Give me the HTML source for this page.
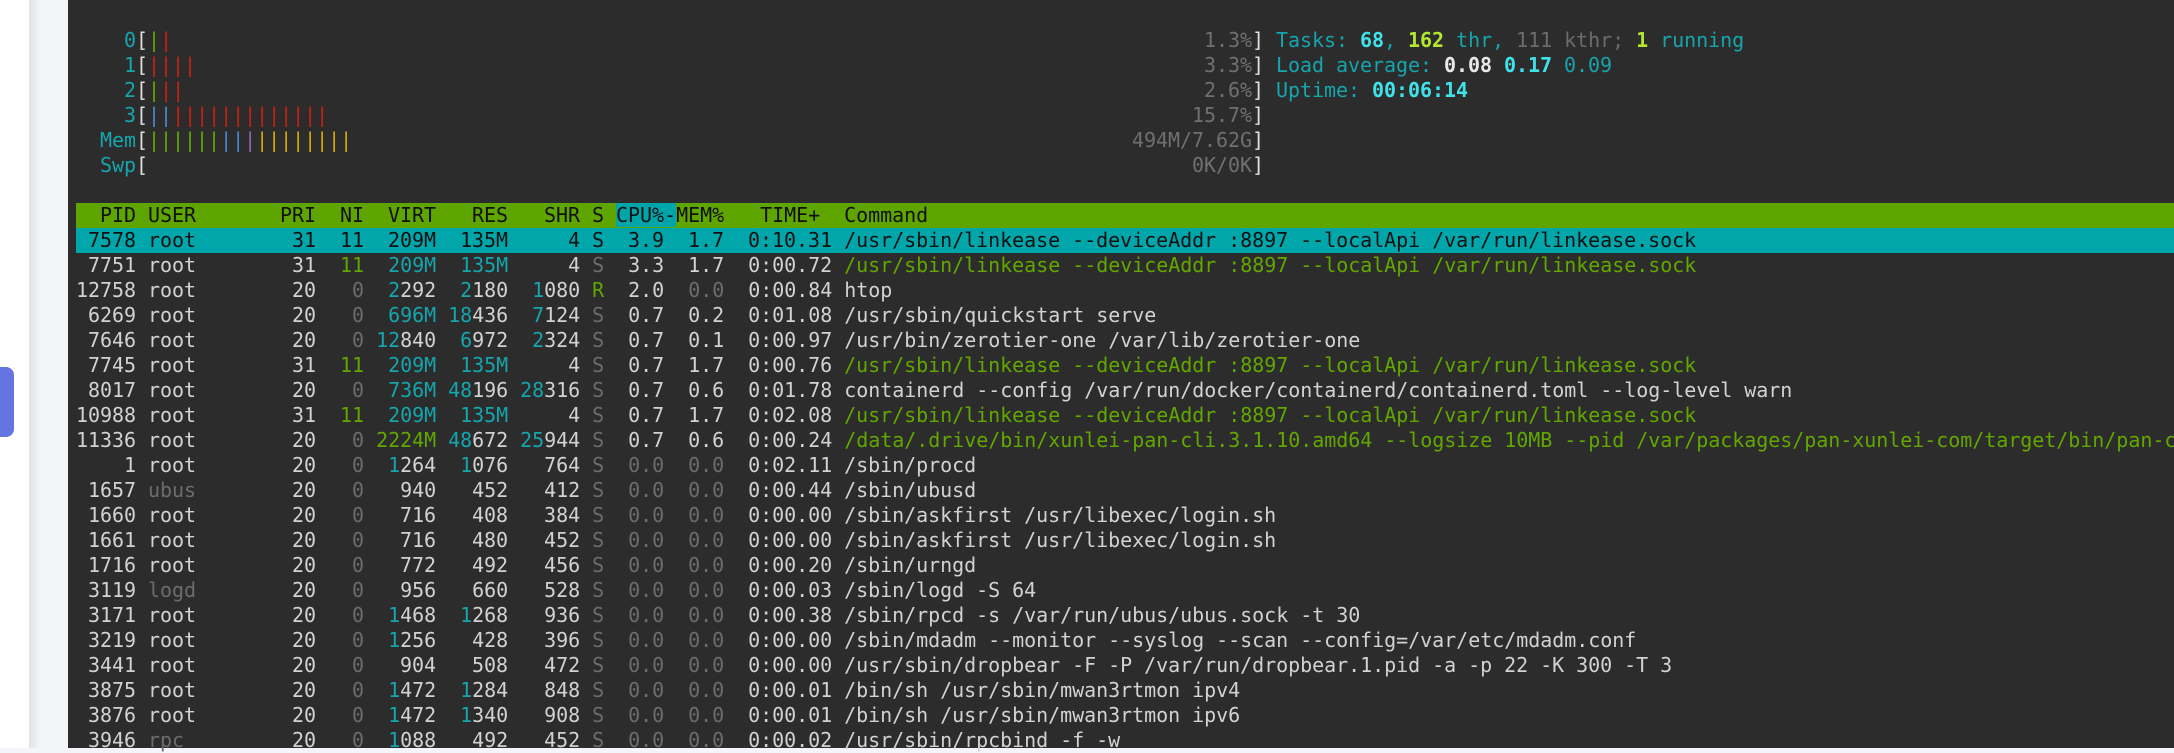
<!DOCTYPE html>
<html><head><meta charset="utf-8">
<style>
html,body{margin:0;padding:0;width:2174px;height:748px;overflow:hidden;background:#f4f5f8;}
#side{position:absolute;left:0;top:0;width:29px;height:748px;background:#fff;}
#shadow{position:absolute;left:29px;top:0;width:10px;height:748px;background:linear-gradient(90deg,#e2e3e7,#f1f2f5);}
#tab{position:absolute;left:0;top:367px;width:14px;height:70px;background:#6474e2;border-radius:0 8px 8px 0;}
#term{position:absolute;left:68px;top:0;width:2106px;height:748px;background:#2c2c2c;}
#t{position:absolute;left:76px;top:28px;right:0;font-family:"DejaVu Sans Mono","Liberation Mono",monospace;font-size:20px;line-height:25px;color:#d2d2d2;white-space:normal;letter-spacing:-0.04px;}
.l{position:relative;display:block;height:25px;white-space:pre;overflow:hidden;}
.c{color:#14a5ad}.g{color:#62a700}.k{color:#6c6c6c}.w{color:#e0e0e0}
.bc{color:#40e2ea;font-weight:bold}.bg{color:#b4e830;font-weight:bold}.bw{color:#e8e8e8;font-weight:bold}
.r{color:#c82010}.bl{color:#4a86d0}.p{color:#9068a8}.y{color:#d4a800}
.pct{position:absolute;left:0;width:1176px;text-align:right;color:#707070;}
.br{position:absolute;left:1176px;color:#e0e0e0;}
.rt{position:absolute;left:1200px;}
.hdr{background:#5fa500;color:#111;}
.hdr .cp{background:#00a5aa;}
.sel{background:#00a6a9;color:#111;}
</style></head><body>
<div id="side"></div><div id="shadow"></div><div id="tab"></div>
<div id="term"></div>
<div id="t">
<div class="l">    <span class="c">0</span><span class="w">[</span><span class="g">|</span><span class="r">|</span><span class="pct">1.3%</span><span class="br">]</span><span class="rt"><span class="c">Tasks: </span><span class="bc">68</span><span class="c">, </span><span class="bg">162</span><span class="c"> thr, </span><span class="k">111 kthr; </span><span class="bg">1</span><span class="c"> running</span></span></div>
<div class="l">    <span class="c">1</span><span class="w">[</span><span class="r">||||</span><span class="pct">3.3%</span><span class="br">]</span><span class="rt"><span class="c">Load average: </span><span class="bw">0.08 </span><span class="bc">0.17 </span><span class="c">0.09</span></span></div>
<div class="l">    <span class="c">2</span><span class="w">[</span><span class="g">|</span><span class="r">||</span><span class="pct">2.6%</span><span class="br">]</span><span class="rt"><span class="c">Uptime: </span><span class="bc">00:06:14</span></span></div>
<div class="l">    <span class="c">3</span><span class="w">[</span><span class="bl">||</span><span class="r">|||||||||||||</span><span class="pct">15.7%</span><span class="br">]</span></div>
<div class="l">  <span class="c">Mem</span><span class="w">[</span><span class="g">||||||</span><span class="bl">||</span><span class="p">|</span><span class="y">||||||||</span><span class="pct">494M/7.62G</span><span class="br">]</span></div>
<div class="l">  <span class="c">Swp</span><span class="w">[</span><span class="pct">0K/0K</span><span class="br">]</span></div>
<div class="l"> </div>
<div class="l hdr">  PID USER       PRI  NI  VIRT   RES   SHR S <span class="cp">CPU%-</span>MEM%   TIME+  Command</div>
<div class="l sel"> 7578 root        31  11  209M  135M     4 S  3.9  1.7  0:10.31 /usr/sbin/linkease --deviceAddr :8897 --localApi /var/run/linkease.sock</div>
<div class="l"> 7751 root        31  <span class="g">11</span>  <span class="c">209M</span>  <span class="c">135M</span>     4 <span class="k">S</span>  3.3  1.7  0:00.72 <span class="g">/usr/sbin/linkease --deviceAddr :8897 --localApi /var/run/linkease.sock</span></div>
<div class="l">12758 root        20   <span class="k">0</span>  <span class="c">2</span>292  <span class="c">2</span>180  <span class="c">1</span>080 <span class="g">R</span>  2.0  <span class="k">0.0</span>  0:00.84 htop</div>
<div class="l"> 6269 root        20   <span class="k">0</span>  <span class="c">696M</span> <span class="c">18</span>436  <span class="c">7</span>124 <span class="k">S</span>  0.7  0.2  0:01.08 /usr/sbin/quickstart serve</div>
<div class="l"> 7646 root        20   <span class="k">0</span> <span class="c">12</span>840  <span class="c">6</span>972  <span class="c">2</span>324 <span class="k">S</span>  0.7  0.1  0:00.97 /usr/bin/zerotier-one /var/lib/zerotier-one</div>
<div class="l"> 7745 root        31  <span class="g">11</span>  <span class="c">209M</span>  <span class="c">135M</span>     4 <span class="k">S</span>  0.7  1.7  0:00.76 <span class="g">/usr/sbin/linkease --deviceAddr :8897 --localApi /var/run/linkease.sock</span></div>
<div class="l"> 8017 root        20   <span class="k">0</span>  <span class="c">736M</span> <span class="c">48</span>196 <span class="c">28</span>316 <span class="k">S</span>  0.7  0.6  0:01.78 containerd --config /var/run/docker/containerd/containerd.toml --log-level warn</div>
<div class="l">10988 root        31  <span class="g">11</span>  <span class="c">209M</span>  <span class="c">135M</span>     4 <span class="k">S</span>  0.7  1.7  0:02.08 <span class="g">/usr/sbin/linkease --deviceAddr :8897 --localApi /var/run/linkease.sock</span></div>
<div class="l">11336 root        20   <span class="k">0</span> <span class="g">2224M</span> <span class="c">48</span>672 <span class="c">25</span>944 <span class="k">S</span>  0.7  0.6  0:00.24 <span class="g">/data/.drive/bin/xunlei-pan-cli.3.1.10.amd64 --logsize 10MB --pid /var/packages/pan-xunlei-com/target/bin/pan-cli</span></div>
<div class="l">    1 root        20   <span class="k">0</span>  <span class="c">1</span>264  <span class="c">1</span>076   764 <span class="k">S  0.0  0.0</span>  0:02.11 /sbin/procd</div>
<div class="l"> 1657 <span class="k">ubus</span>        20   <span class="k">0</span>   940   452   412 <span class="k">S  0.0  0.0</span>  0:00.44 /sbin/ubusd</div>
<div class="l"> 1660 root        20   <span class="k">0</span>   716   408   384 <span class="k">S  0.0  0.0</span>  0:00.00 /sbin/askfirst /usr/libexec/login.sh</div>
<div class="l"> 1661 root        20   <span class="k">0</span>   716   480   452 <span class="k">S  0.0  0.0</span>  0:00.00 /sbin/askfirst /usr/libexec/login.sh</div>
<div class="l"> 1716 root        20   <span class="k">0</span>   772   492   456 <span class="k">S  0.0  0.0</span>  0:00.20 /sbin/urngd</div>
<div class="l"> 3119 <span class="k">logd</span>        20   <span class="k">0</span>   956   660   528 <span class="k">S  0.0  0.0</span>  0:00.03 /sbin/logd -S 64</div>
<div class="l"> 3171 root        20   <span class="k">0</span>  <span class="c">1</span>468  <span class="c">1</span>268   936 <span class="k">S  0.0  0.0</span>  0:00.38 /sbin/rpcd -s /var/run/ubus/ubus.sock -t 30</div>
<div class="l"> 3219 root        20   <span class="k">0</span>  <span class="c">1</span>256   428   396 <span class="k">S  0.0  0.0</span>  0:00.00 /sbin/mdadm --monitor --syslog --scan --config=/var/etc/mdadm.conf</div>
<div class="l"> 3441 root        20   <span class="k">0</span>   904   508   472 <span class="k">S  0.0  0.0</span>  0:00.00 /usr/sbin/dropbear -F -P /var/run/dropbear.1.pid -a -p 22 -K 300 -T 3</div>
<div class="l"> 3875 root        20   <span class="k">0</span>  <span class="c">1</span>472  <span class="c">1</span>284   848 <span class="k">S  0.0  0.0</span>  0:00.01 /bin/sh /usr/sbin/mwan3rtmon ipv4</div>
<div class="l"> 3876 root        20   <span class="k">0</span>  <span class="c">1</span>472  <span class="c">1</span>340   908 <span class="k">S  0.0  0.0</span>  0:00.01 /bin/sh /usr/sbin/mwan3rtmon ipv6</div>
<div class="l"> 3946 <span class="k">rpc</span>         20   <span class="k">0</span>  <span class="c">1</span>088   492   452 <span class="k">S  0.0  0.0</span>  0:00.02 /usr/sbin/rpcbind -f -w</div>
</div>
</body></html>
